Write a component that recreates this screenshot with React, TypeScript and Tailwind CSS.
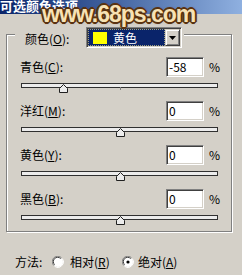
import React from 'react';

const rows = [
  { label: '青色', key: 'C', value: -58 },
  { label: '洋红', key: 'M', value: 0 },
  { label: '黄色', key: 'Y', value: 0 },
  { label: '黑色', key: 'B', value: 0 },
];

const sunken =
  'border border-t-[#808080] border-l-[#808080] border-r-white border-b-white shadow-[inset_1px_1px_0_#404040,inset_-1px_-1px_0_#d4d0c8]';

function Label({ text, k }: { text: string; k: string }) {
  return (
    <span>
      {text}(<span className="underline underline-offset-[1px]">{k}</span>):
    </span>
  );
}

function Thumb() {
  return (
    <svg width="9" height="9" viewBox="0 0 9 9">
      <path d="M0.5 8.5 V4.5 L4.5 0.5 L8.5 4.5 V8.5 Z" fill="#ececec" stroke="#202020" strokeWidth="1" />
    </svg>
  );
}

function Slider({ value }: { value: number }) {
  const width = 197;
  const center = 99;
  const pos = center + (value / 100) * 97;
  return (
    <div className="relative ml-[1px] mt-[6px] h-[12px] w-[197px]">
      <div className="mt-[3px] h-[5px] w-full border border-[#303030] bg-[#ececec]" style={{ width }} />
      <div className="absolute left-[99px] top-[4px] h-[3px] w-[1px] bg-[#808080]" />
      <div className="absolute top-[1px] leading-none" style={{ left: pos - 4.5 }}>
        <Thumb />
      </div>
    </div>
  );
}

function Radio({ checked }: { checked?: boolean }) {
  return (
    <svg width="12" height="12" viewBox="0 0 12 12">
      <circle cx="6" cy="6" r="5" fill="#fff" />
      <path d="M1.8 9.5 A5 5 0 0 1 9.5 1.8" fill="none" stroke="#808080" strokeWidth="1" />
      <path d="M2.6 8.7 A4 4 0 0 1 8.7 2.6" fill="none" stroke="#404040" strokeWidth="1" />
      <path d="M10.2 2.5 A5.5 5.5 0 0 1 2.5 10.2" fill="none" stroke="#ffffff" strokeWidth="1" />
      {checked && <circle cx="6" cy="6" r="1.6" fill="#000" />}
    </svg>
  );
}

export default function App() {
  return (
    <div className="relative h-[275px] w-[242px] overflow-hidden bg-[#d4d0c8] font-['Noto_Sans_CJK_SC',sans-serif] text-[12px] leading-[14px] text-black">
      <div className="h-[14px] overflow-hidden bg-gradient-to-r from-[#0a246a] to-[#8fb0e0]">
        <div className="-mt-[1px] text-[13px] font-bold leading-[13px] text-white">可选颜色选项</div>
      </div>

      <div className="relative ml-[6px] mt-[20px] h-[198px] w-[226px] border border-[#808080] shadow-[1px_1px_0_#fff,inset_1px_1px_0_#fff]">
        <div className="absolute left-[8px] top-[-8px] flex items-center bg-[#d4d0c8] pl-[10px] pr-[2px]">
          <span className="mt-[2px] w-[61px]">
            <Label text="颜色" k="O" />
          </span>
          <div className={`flex h-[21px] w-[96px] ${sunken} p-[1px]`}>
            <div className="flex flex-1 items-center border border-dotted border-[#a0a080] bg-[#0a246a]">
              <div className="ml-[4px] h-[12px] w-[14px] bg-[#ffff00]" />
              <span className="ml-[6px] text-white">黄色</span>
            </div>
            <div className="flex w-[15px] items-center justify-center border border-t-[#d4d0c8] border-l-[#d4d0c8] border-r-[#404040] border-b-[#404040] bg-[#d4d0c8] shadow-[inset_1px_1px_0_#fff,inset_-1px_-1px_0_#808080]">
              <svg width="7" height="4" viewBox="0 0 7 4">
                <path d="M0 0 H7 L3.5 4 Z" fill="#000" />
              </svg>
            </div>
          </div>
        </div>

        <div className="pl-[13px] pt-[22px]">
          {rows.map((r) => (
            <div key={r.key} className="h-[44px]">
              <div className="flex h-[20px] items-center">
                <span className="w-[146px]">
                  <Label text={r.label} k={r.key} />
                </span>
                <div className={`flex h-[20px] w-[38px] items-center bg-white pl-[2px] ${sunken}`}>{r.value}</div>
                <span className="ml-[5px]">%</span>
              </div>
              <Slider value={r.value} />
            </div>
          ))}
        </div>
      </div>

      <div className="mt-[23px] flex h-[14px] items-center pl-[15px]">
        <span className="w-[37px]">方法:</span>
        <Radio />
        <span className="ml-[6px] w-[52px]">
          相对(<span className="underline underline-offset-[1px]">R</span>)
        </span>
        <Radio checked />
        <span className="ml-[4px]">
          绝对(<span className="underline underline-offset-[1px]">A</span>)
        </span>
      </div>

      <div className="absolute left-[42px] top-[3px] font-['Liberation_Sans',sans-serif] text-[23px] font-bold leading-[23px] tracking-[-1px] text-[#f7e2b4] [text-shadow:1px_1px_0_#5a3210,-1px_-1px_0_#5a3210,1px_-1px_0_#5a3210,-1px_1px_0_#5a3210,2px_0_0_#5a3210,-2px_0_0_#5a3210,0_2px_0_#5a3210,0_-2px_0_#5a3210,0_0_3px_#3a1a05]">
        www.68ps.com
      </div>
    </div>
  );
}
